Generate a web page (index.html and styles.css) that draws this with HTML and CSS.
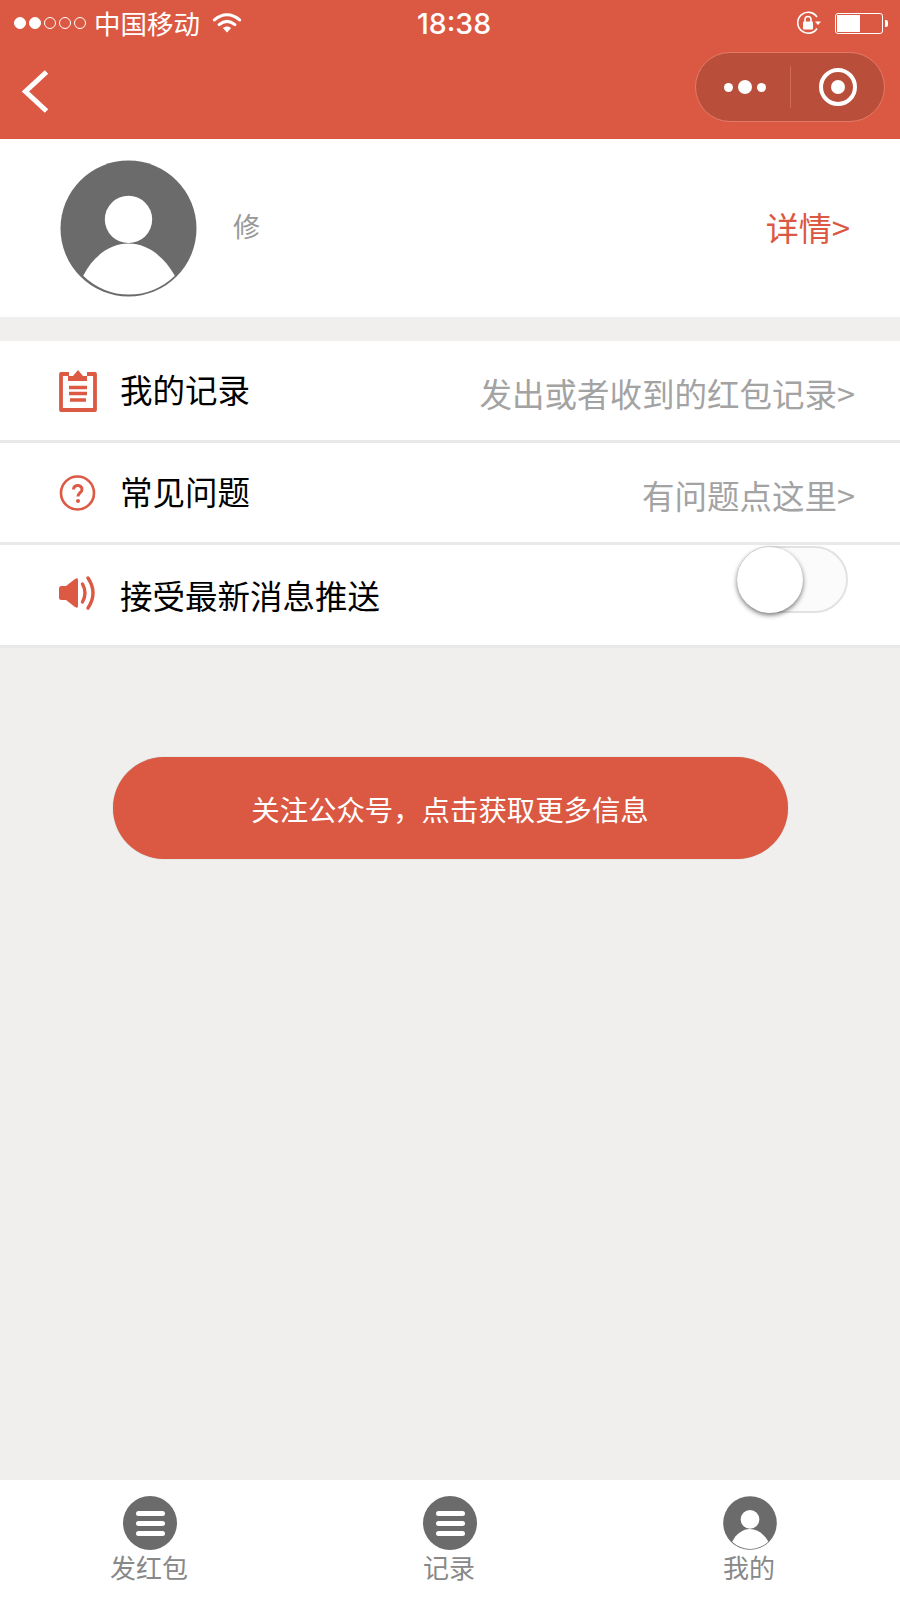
FILE: index.html
```html
<!DOCTYPE html>
<html lang="zh-CN">
<head>
  <meta charset="UTF-8">
  <title>我的</title>
  <meta name="viewport" content="width=device-width, initial-scale=1.0">
  <link rel="stylesheet" href="styles.css">
</head>
<body>
<div class="page">
  <header class="header">
    <div class="status">
      <div class="status-left">
        <span class="signal">
          <i class="dot on"></i><i class="dot on"></i><i class="dot"></i><i class="dot"></i><i class="dot"></i>
        </span>
        <span class="carrier">中国移动</span>
        <svg class="wifi" width="30" height="21" viewBox="0 0 28 20">
          <path d="M2 7.5C9.5 1 18.5 1 26 7.5" fill="none" stroke="#fff" stroke-width="3" stroke-linecap="round"/>
          <path d="M6.5 12C11.5 7.8 16.5 7.8 21.5 12" fill="none" stroke="#fff" stroke-width="3" stroke-linecap="round"/>
          <path d="M10 15.2C12.5 13.2 15.5 13.2 18 15.2L14 19.5Z" fill="#fff"/>
        </svg>
      </div>
      <div class="time">18:38</div>
      <div class="status-right">
        <svg class="lock" width="26" height="24" viewBox="0 0 26 24">
          <path d="M21 17.5A10.5 10.5 0 1 1 21 6" fill="none" stroke="#fff" stroke-width="1.6"/>
          <path d="M19 10.5h6l-3 3.5z" fill="#fff"/>
          <rect x="7" y="10.5" width="10" height="8" rx="1" fill="#fff"/>
          <path d="M9 11V8.5a3 3 0 0 1 6 0V11" fill="none" stroke="#fff" stroke-width="1.6"/>
        </svg>
        <div class="battery"><div class="battery-fill"></div></div>
        <i class="battery-nub"></i>
      </div>
    </div>
    <div class="nav">
      <svg class="back" width="27" height="43" viewBox="0 0 27 43">
        <path d="M24.5 2L3.5 21.5L24.5 41" fill="none" stroke="#fff" stroke-width="5"/>
      </svg>
      <div class="capsule">
        <div class="capsule-more">
          <i class="more-dot"></i><i class="more-dot big"></i><i class="more-dot"></i>
        </div>
        <div class="capsule-close"><i class="close-ring"></i></div>
      </div>
    </div>
  </header>

  <section class="profile">
    <svg class="avatar" width="137" height="137" viewBox="0 0 136 136">
      <circle cx="68" cy="68" r="67.5" fill="#6b6b6b"/>
      <circle cx="68" cy="59" r="23.5" fill="#fff"/>
      <path d="M23 115C33 95 50 83 68 83C86 83 103 95 114 115A65 65 0 0 1 23 115Z" fill="#fff"/>
    </svg>
    <div class="name">修</div>
    <div class="detail">详情&gt;</div>
  </section>

  <section class="menu">
    <div class="row">
      <svg class="row-icon" width="38" height="42" viewBox="0 0 38 42">
        <path d="M10 4H2v36h34V4h-8" fill="none" stroke="#dc5944" stroke-width="3.8" stroke-linejoin="round"/>
        <path d="M19 0l5 6h4v5H9V6h5z" fill="#dc5944"/>
        <path d="M10 17.500h18M10 23.500h18M11 30h16" stroke="#dc5944" stroke-width="3.400"/>
      </svg>
      <div class="row-label">我的记录</div>
      <div class="row-hint">发出或者收到的红包记录&gt;</div>
    </div>
    <div class="row">
      <svg class="row-icon" width="38" height="36" viewBox="0 0 38 36">
        <circle cx="18.500" cy="18" r="16.500" fill="none" stroke="#dc5944" stroke-width="2.600"/>
        <path d="M14.500 14.500c0-5.500 8.500-5.500 8.500 0c0 3-4 3.500-4 7" fill="none" stroke="#dc5944" stroke-width="3"/>
        <circle cx="19" cy="26" r="2" fill="#dc5944"/>
      </svg>
      <div class="row-label">常见问题</div>
      <div class="row-hint">有问题点这里&gt;</div>
    </div>
    <div class="row">
      <svg class="row-icon" width="38" height="34" viewBox="0 0 38 34">
        <path d="M0 12.500Q0 10 2.500 10H7L16 3Q19 1 19 4V30Q19 33 16 31L7 24H2.500Q0 24 0 21.500Z" fill="#dc5944"/>
        <path d="M23.500 8Q28.500 17 23.500 26" fill="none" stroke="#dc5944" stroke-width="3.400" stroke-linecap="round"/>
        <path d="M29 2Q39 17 29 32" fill="none" stroke="#dc5944" stroke-width="3.400" stroke-linecap="round"/>
      </svg>
      <div class="row-label">接受最新消息推送</div>
      <div class="switch"><div class="switch-knob"></div></div>
    </div>
  </section>

  <main class="content">
    <div class="follow-btn">关注公众号，点击获取更多信息</div>
  </main>

  <nav class="tabbar">
    <div class="tab">
      <div class="tab-menu-icon"><i></i><i></i><i></i></div>
      <div class="tab-text">发红包</div>
    </div>
    <div class="tab">
      <div class="tab-menu-icon"><i></i><i></i><i></i></div>
      <div class="tab-text">记录</div>
    </div>
    <div class="tab">
      <svg width="54" height="54" viewBox="0 0 136 136">
        <circle cx="68" cy="68" r="67.5" fill="#6b6b6b"/>
        <circle cx="68" cy="59" r="23.5" fill="#fff"/>
        <path d="M23 115C33 95 50 83 68 83C86 83 103 95 114 115A65 65 0 0 1 23 115Z" fill="#fff"/>
      </svg>
      <div class="tab-text">我的</div>
    </div>
  </nav>
</div>
</body>
</html>
```

FILE: styles.css
```css
body {
  margin: 0;
  font-family: "Noto Sans CJK SC", "Noto Sans", sans-serif;
  background: #f0efed;
  color: #000;
}
i {
  display: block;
}
.page {
  width: 900px;
  height: 1600px;
  display: flex;
  flex-direction: column;
  overflow: hidden;
}

/* header */
.header {
  height: 139px;
  background: #db5943;
  color: #fff;
}
.status {
  height: 46px;
  display: grid;
  grid-template-columns: 1fr auto 1fr;
  align-items: center;
  padding: 0 12px 0 14px;
}
.status-left {
  display: flex;
  align-items: center;
}
.signal {
  display: flex;
  gap: 3px;
}
.dot {
  width: 12px;
  height: 12px;
  border: 1px solid #fff;
  border-radius: 50%;
  box-sizing: border-box;
}
.dot.on {
  background: #fff;
}
.carrier {
  margin-left: 8px;
  font-size: 26.5px;
  line-height: 46px;
}
.wifi {
  margin-left: 12px;
  margin-top: -2px;
}
.time {
  font-family: Inter, sans-serif;
  font-size: 28.5px;
  font-weight: 500;
  margin-left: 6px;
}
.status-right {
  display: flex;
  align-items: center;
  justify-content: flex-end;
}
.lock {
  margin-right: 13px;
}
.battery {
  width: 48px;
  height: 21px;
  border: 1px solid #fff;
  border-radius: 3px;
  padding: 1px;
  box-sizing: border-box;
}
.battery-fill {
  width: 23px;
  height: 100%;
  background: #fff;
}
.battery-nub {
  width: 3px;
  height: 7px;
  margin-left: 2px;
  background: #fff;
  border-radius: 0 2px 2px 0;
}
.nav {
  height: 93px;
  display: flex;
  align-items: flex-start;
  justify-content: space-between;
  padding: 0 15px 0 22px;
}
.back {
  margin-top: 24px;
}
.capsule {
  width: 190px;
  height: 70px;
  margin-top: 6px;
  display: flex;
  align-items: center;
  background: #b94f3b;
  border: 1px solid #e37a68;
  border-radius: 35px;
  box-sizing: border-box;
}
.capsule-more {
  width: 95px;
  height: 42px;
  display: flex;
  align-items: center;
  justify-content: center;
  gap: 5px;
  border-right: 1px solid #cf6a58;
  padding-left: 4px;
  box-sizing: border-box;
}
.more-dot {
  width: 9px;
  height: 9px;
  background: #fff;
  border-radius: 50%;
}
.more-dot.big {
  width: 14px;
  height: 14px;
}
.capsule-close {
  flex: 1;
  display: flex;
  justify-content: center;
}
.close-ring {
  width: 38px;
  height: 38px;
  border: 4px solid #fff;
  border-radius: 50%;
  box-sizing: border-box;
  position: relative;
}
.close-ring::after {
  content: "";
  position: absolute;
  left: 8px;
  top: 8px;
  width: 14px;
  height: 14px;
  background: #fff;
  border-radius: 50%;
}

/* profile */
.profile {
  height: 178px;
  display: flex;
  align-items: center;
  padding: 0 50px 0 60px;
  background: #fff;
  box-sizing: border-box;
}
.name {
  margin-left: 36px;
  font-size: 27px;
  color: #999;
  margin-top: -5px;
  flex: 1;
}
.detail {
  font-size: 33px;
  color: #db5943;
  margin-top: -3px;
}

/* menu rows */
.menu {
  margin-top: 24px;
}
.row {
  height: 102px;
  display: flex;
  align-items: center;
  padding: 0 45px 0 59px;
  background: #fff;
  border-bottom: 3px solid #e9e9e7;
  box-sizing: border-box;
  position: relative;
}
.row:nth-child(3) {
  height: 103px;
}
.row-icon {
  margin-right: 23px;
  flex: none;
}
.row:nth-child(3) .row-icon {
  margin-top: -4px;
}
.row-label {
  flex: 1;
  font-size: 32.5px;
  margin-top: -4px;
}
.row:nth-child(3) .row-label {
  margin-top: -2px;
}
.row-hint {
  font-size: 32.5px;
  color: #a3a3a3;
  margin-top: 4px;
}
.switch {
  width: 111px;
  height: 67px;
  align-self: flex-start;
  margin: 1px 7px 0 0;
  background: #fbfbfb;
  border: 2px solid #e2e2e2;
  border-radius: 34px;
  box-sizing: border-box;
}
.switch-knob {
  width: 66px;
  height: 66px;
  margin: -1px 0 0 -2px;
  background: #fff;
  border-radius: 50%;
  box-shadow: 0 2px 5px rgba(0, 0, 0, 0.55);
}

/* button */
.content {
  flex: 1;
  padding-top: 109px;
}
.follow-btn {
  width: 675px;
  height: 102px;
  margin: 0 auto;
  display: flex;
  align-items: center;
  justify-content: center;
  background: #db5943;
  color: #fff;
  font-size: 28.4px;
  border-radius: 51px;
  box-shadow: 0 0 1px rgba(0, 0, 0, 0.3);
}

/* bottom tabs */
.tabbar {
  height: 120px;
  display: flex;
  background: #fff;
}
.tab {
  width: 300px;
  display: flex;
  flex-direction: column;
  align-items: center;
  padding-top: 16px;
  box-sizing: border-box;
}
.tab-menu-icon {
  width: 54px;
  height: 54px;
  display: flex;
  flex-direction: column;
  align-items: center;
  justify-content: center;
  gap: 5px;
  background: #6b6b6b;
  border-radius: 50%;
}
.tab-menu-icon i {
  width: 29px;
  height: 5px;
  background: #fff;
  border-radius: 3px;
}
.tab-text {
  font-size: 26px;
  line-height: 36px;
  color: #888;
  margin-left: -2px;
  margin-top: -1px;
}
```
